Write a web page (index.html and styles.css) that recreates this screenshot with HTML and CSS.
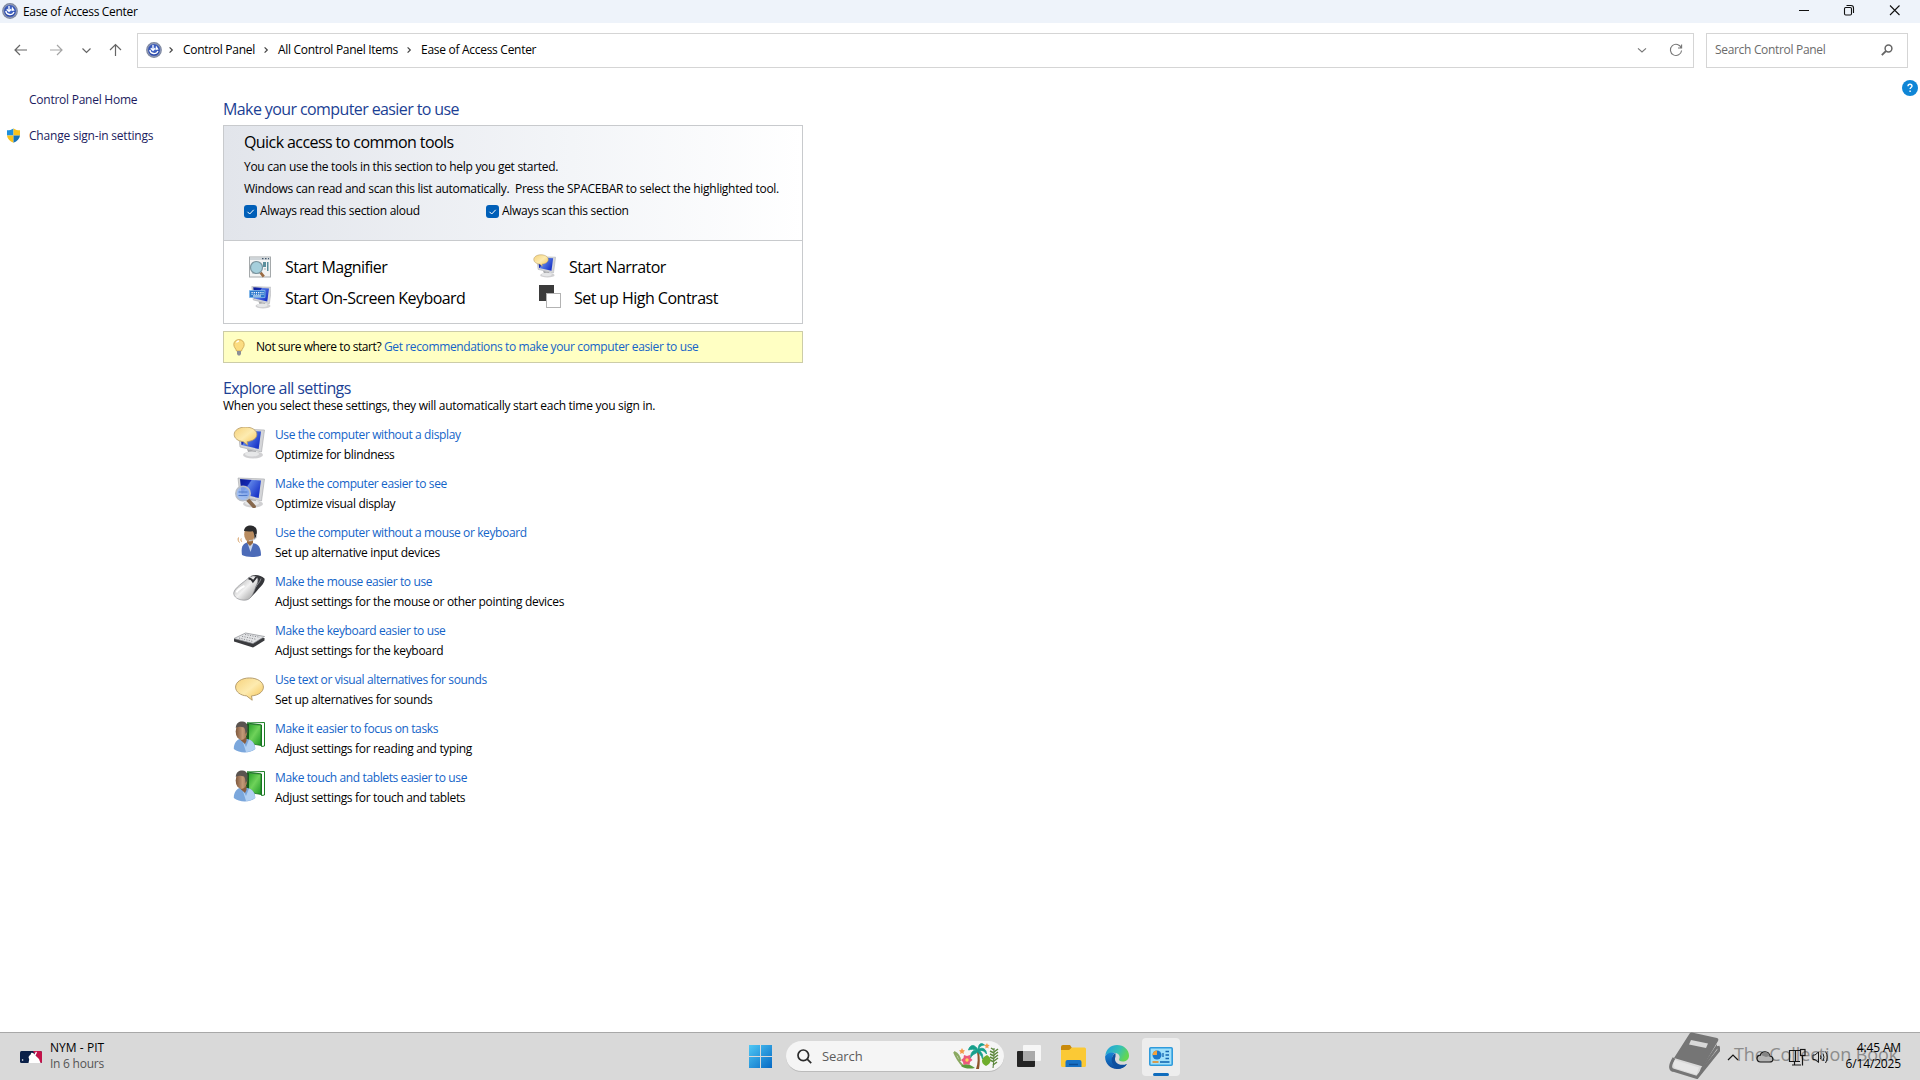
FILE: index.html
```html
<!doctype html>
<html lang="en-us">
  <head>
    <meta charset="utf-8">
    <title>Ease of Access Center</title>
    <link rel="stylesheet" href="styles.css">
  </head>
  <body>
	<!-- shared icon parts -->
	<svg class="defs" width="0" height="0">
		<defs>
			<linearGradient id="g-screen" x1="0" y1="0" x2="1" y2="0.6">
				<stop offset="0" stop-color="#0a1a90"/><stop offset="0.4" stop-color="#1429b4"/><stop offset="0.45" stop-color="#5b80e6"/><stop offset="1" stop-color="#1a35c8"/>
			</linearGradient>
			<linearGradient id="g-bubble" x1="0" y1="0" x2="1" y2="1">
				<stop offset="0" stop-color="#f6d27c"/><stop offset="0.5" stop-color="#fdebb0"/><stop offset="1" stop-color="#f5c04c"/>
			</linearGradient>
			<linearGradient id="g-silver" x1="0" y1="0" x2="1" y2="1">
				<stop offset="0" stop-color="#9a9a9a"/><stop offset="0.5" stop-color="#f1f1f1"/><stop offset="1" stop-color="#8a8a8a"/>
			</linearGradient>
			<linearGradient id="g-skin" x1="0" y1="0" x2="1" y2="0">
				<stop offset="0" stop-color="#7d573c"/><stop offset="0.6" stop-color="#c39a78"/><stop offset="1" stop-color="#9c7252"/>
			</linearGradient>
			<linearGradient id="g-green" x1="0" y1="0" x2="1" y2="1">
				<stop offset="0" stop-color="#1c9a22"/><stop offset="0.5" stop-color="#6fd25a"/><stop offset="1" stop-color="#1d9a26"/>
			</linearGradient>
			<linearGradient id="g-win" x1="0" y1="0" x2="1" y2="1">
				<stop offset="0" stop-color="#4fc8f5"/><stop offset="1" stop-color="#0669c4"/>
			</linearGradient>
			<radialGradient id="g-ease" cx="0.5" cy="0.4" r="0.6">
				<stop offset="0" stop-color="#4d74d8"/><stop offset="1" stop-color="#233f9c"/>
			</radialGradient>
			<symbol id="ease" viewBox="0 0 16 16">
				<circle cx="8" cy="8" r="7.900" fill="#7d879f"/>
				<circle cx="8" cy="8" r="6.300" fill="url(#g-ease)" stroke="#b3bcd4" stroke-width=".6"/>
				<path d="M7 3v5M4.800 6.200L7 8.400l2.200-2.200M3.800 7.800a4.300 4.300 0 0 0 8.200 1.200" fill="none" stroke="#fff" stroke-width="1.300"/>
				<path d="M10 3.500l2.700 4-3.200.5z" fill="#fff"/>
			</symbol>
			<symbol id="monitor" viewBox="0 0 32 32">
				<ellipse cx="20" cy="28" rx="10" ry="3.400" fill="#d0d0d2"/>
				<path d="M14 22l9 2-1 4h-6z" fill="#a9aaad"/>
				<ellipse cx="19" cy="27" rx="7" ry="2.400" fill="#e6e7e8"/>
				<path d="M5 2l26.500 1-3 22L7 20z" fill="#d4d5d8" stroke="#a4a6aa" stroke-width=".6"/>
				<path d="M7 3l21 1.500-2.300 17.500L8.500 18z" fill="url(#g-screen)"/>
			</symbol>
			<symbol id="bubble" viewBox="0 0 32 25">
				<path d="M16 1C8 1 1.500 5 1.500 10.500c0 5 5 8.600 11.500 9.200l5.800 4.500-.7-4.500c7-.5 12.400-4.200 12.400-9.200C30.500 5 24 1 16 1z" fill="url(#g-bubble)" stroke="#b39a68"/>
			</symbol>
			<symbol id="reader" viewBox="0 0 32 32">
				<path d="M14 2l17.500-.5V25l-3 .5V4z" fill="#fff" stroke="#1b7e25"/>
				<path d="M14 3l14 1v20.500L14 22z" fill="url(#g-green)" stroke="#11641b" stroke-width=".7"/>
				<path d="M13 3h3v20h-3z" fill="#175c1d"/>
				<path d="M.8 28c0-6 3-10 8-10.500l6 .5c5 1.500 7.500 5 7.500 10-5 4.500-16 4.500-21.500 0z" fill="#7ba7dc"/>
				<path d="M9 18l4 8 3-7.500c4 1.500 6 5 6 9.500-3 2-6 3-9 3z" fill="#b2d0f2"/>
				<path d="M7.500 16h6v4l-1.500 3-4.500-4z" fill="#8a5d3c"/>
				<ellipse cx="8.500" cy="10.500" rx="5.800" ry="8.500" fill="url(#g-skin)"/>
				<path d="M2.800 7C3 2 6 .4 9.500.5c5 .2 6 5 4.500 10.500l-1.500 2c0-3-.5-5-1.500-6.500C8 5.500 5 5.500 2.800 7z" fill="#5a5450"/>
			</symbol>
			<symbol id="chev" viewBox="0 0 6 10">
				<path d="M1.600 2.300L4.300 5 1.600 7.700" fill="none" stroke="#444" stroke-width="1.200"/>
			</symbol>
			<symbol id="down" viewBox="0 0 10 8">
				<path d="M1 2.300L5 6l4-3.700" fill="none" stroke="currentColor" stroke-width="1.100"/>
			</symbol>
		</defs>
	</svg>

	<div class="titlebar">
		<svg width="16" height="16"><use href="#ease"/></svg>
		<span class="caption">Ease of Access Center</span>
		<svg class="winbtn" width="112" height="14" viewBox="0 0 112 14" fill="none" stroke="#111" stroke-width="1.100">
			<path d="M11 7.500h10M102 2.500l9.500 9.500M111.500 2.500L102 12"/>
			<rect x="56.500" y="4.500" width="7" height="7.500" rx="1.200"/>
			<path d="M58.500 2.500h4.500q2.500 0 2.500 2.500v5"/>
		</svg>
	</div>

	<div class="nav">
		<svg class="arrows" width="110" height="16" viewBox="0 0 110 16" fill="none" stroke="#666" stroke-width="1.200">
			<path d="M1 8h12M6 3L1 8l5 5"/>
			<path d="M36 8h12M43 3l5 5-5 5" stroke="#a5a5a5"/>
			<path d="M68.500 6.500l4 4 4-4"/>
			<path d="M101.500 14V2.500M96 8l5.500-5.500L107 8"/>
		</svg>
		<div class="address">
			<svg width="16" height="16"><use href="#ease"/></svg>
			<svg class="sep first" width="6" height="10"><use href="#chev"/></svg>
			<span>Control Panel</span>
			<svg class="sep" width="6" height="10"><use href="#chev"/></svg>
			<span>All Control Panel Items</span>
			<svg class="sep" width="6" height="10"><use href="#chev"/></svg>
			<span>Ease of Access Center</span>
			<svg class="drop" width="10" height="8"><use href="#down"/></svg>
			<svg width="14" height="14" viewBox="0 0 14 14" fill="none" stroke="#777" stroke-width="1.100">
				<path d="M12.300 5A5.600 5.600 0 1 0 12.600 7.500M12.600 1.500V5H9"/>
			</svg>
		</div>
		<div class="search">
			<span>Search Control Panel</span>
			<svg width="12" height="12" viewBox="0 0 12 12" fill="none" stroke="#666">
				<circle cx="7.500" cy="4.500" r="3.400" stroke-width="1.500"/>
				<path d="M5 7L.8 11.200" stroke-width="1.800"/>
			</svg>
		</div>
	</div>

	<div class="main">
		<div class="sidebar">
			<a>Control Panel Home</a>
			<a class="shielded">
				<svg width="15" height="15" viewBox="0 0 15 15">
					<path d="M7.500.5C5.500 1.800 3.500 2.300 1 2.300V7.500h6.500z" fill="#1f8fdc"/>
					<path d="M7.500.5c2 1.300 4 1.800 6.500 1.800V7.500H7.500z" fill="#f9c21c"/>
					<path d="M1 7.500c.3 3.300 2.800 5.800 6.500 7.200V7.500z" fill="#f9c21c"/>
					<path d="M14 7.500c-.3 3.300-2.800 5.800-6.500 7.200V7.500z" fill="#1672b8"/>
				</svg>
				Change sign-in settings
			</a>
		</div>

		<div class="content">
			<h2>Make your computer easier to use</h2>
			<div class="panel">
				<div class="quick">
					<h3>Quick access to common tools</h3>
					<p>You can use the tools in this section to help you get started.</p>
					<p>Windows can read and scan this list automatically.&nbsp; Press the SPACEBAR to select the highlighted tool.</p>
					<div class="checks">
						<label><svg class="check" viewBox="0 0 13 13"><path d="M3.500 6.800l2.200 2.200 4-4.200"/></svg>Always read this section aloud</label>
						<label><svg class="check" viewBox="0 0 13 13"><path d="M3.500 6.800l2.200 2.200 4-4.200"/></svg>Always scan this section</label>
					</div>
				</div>
				<div class="tools">
					<a>
						<svg width="22" height="22" viewBox="0 0 22 22">
							<rect x=".5" y="1" width="21" height="20" fill="#f3f4f4" stroke="#a5a9ab"/>
							<path d="M1 1.500h20v2.500H1z" fill="#cfd5d9"/>
							<path d="M13 2.700h1.500M16 2.700h1.500M19 2.700h1" stroke="#41566b" stroke-width="1.200"/>
							<path d="M14 6h3v5h-3zM18 6h1.500v9H18z" fill="#5b8f9c"/>
							<path d="M3 7h6M3 17h5M15 13h2" stroke="#a3b0b6"/>
							<path d="M11.500 16.500l3.300 4.200" stroke="#9b6b43" stroke-width="2.800"/>
							<circle cx="7.500" cy="11.500" r="6" fill="#a5cfdc" stroke="#7b959f" stroke-width="1.200"/>
						</svg>
						Start Magnifier
					</a>
					<a class="narrator">
						<svg class="raised" width="23" height="24" viewBox="0 0 23 24">
							<use href="#monitor" x="0" y="1" width="23" height="23"/>
							<use href="#bubble" x="0" y="0" width="16" height="13"/>
						</svg>
						Start Narrator
					</a>
					<a>
						<svg class="raised" width="22" height="24" viewBox="0 0 22 24">
							<use href="#monitor" x="-1" y="0" width="24" height="24"/>
							<path d="M.5 5.500h15.500v7H.5z" fill="#2b78cc" stroke="#7fb6ea" stroke-width=".8"/>
							<path d="M2.500 7.500h12M2.500 9.200h12" stroke="#fff" stroke-dasharray="1.200 1"/>
							<path d="M4 11h8" stroke="#fff"/>
						</svg>
						Start On-Screen Keyboard
					</a>
					<a class="contrast">
						<svg class="raised" width="22" height="24" viewBox="0 0 22 24">
							<rect x="0" y="0" width="15" height="16" fill="#3b3b3b"/>
							<rect x="7.500" y="8.500" width="14" height="14" fill="#fff" stroke="#b3b3b3"/>
						</svg>
						Set up High Contrast
					</a>
				</div>
			</div>

			<div class="note">
				<svg width="12" height="17" viewBox="0 0 12 17">
					<path d="M6 .6C2.800.6.8 2.800.8 5.600c0 2.600 2.200 4 2.700 6.400h5c.5-2.400 2.700-3.800 2.700-6.400C11.200 2.800 9.200.6 6 .6z" fill="#fbdc80" stroke="#c9a04c" stroke-width=".8"/>
					<path d="M3.500 3.500C4 2.500 5 2 6 2" stroke="#fff" fill="none" stroke-width="1.300"/>
					<path d="M4 12h4v3L7 16.500H5L4 15z" fill="#8c8f96"/>
				</svg>
				<span>Not sure where to start? <a>Get recommendations to make your computer easier to use</a></span>
			</div>

			<h2 class="explore">Explore all settings</h2>
			<p class="intro">When you select these settings, they will automatically start each time you sign in.</p>

			<ul class="settings">
				<li>
					<svg width="32" height="32" viewBox="0 0 32 32">
						<use href="#monitor" width="32" height="32"/>
						<use href="#bubble" x="0" y="-1" width="25" height="20"/>
					</svg>
					<div><a>Use the computer without a display</a><p>Optimize for blindness</p></div>
				</li>
				<li>
					<svg width="32" height="32" viewBox="0 0 32 32">
						<use href="#monitor" width="32" height="32"/>
						<path d="M15 24l6 6.500" stroke="#87694d" stroke-width="3.800" stroke-linecap="round"/>
						<circle cx="10" cy="17.500" r="7.200" fill="#8fb3ef" fill-opacity=".85" stroke="#b8bec8" stroke-width="1.600"/>
						<path d="M5.500 16h9M5.500 19.500h9" stroke="#4e78c8"/>
					</svg>
					<div><a>Make the computer easier to see</a><p>Optimize visual display</p></div>
				</li>
				<li>
					<svg width="32" height="32" viewBox="0 0 32 32">
						<path d="M9 30c-1-7 0-11 5-12.500l6 .5c5 1 8 4 8 12.500-4 2-15 2-19-.5z" fill="#4c6bb8"/>
						<path d="M14.500 18l3 9 3-9z" fill="#c6d4ec"/>
						<path d="M14 13h6v5l-3 3-3-3z" fill="#96683f"/>
						<ellipse cx="16.500" cy="9.500" rx="5.300" ry="7.500" fill="#b98c60"/>
						<path d="M11 6C11.500 1.500 15 .2 19 .7c5 .8 6 6 3.800 11.500l-1.500 2c.3-4-.3-6.500-1.500-8-3 .4-6 .3-8.800-.2z" fill="#2b2b2d"/>
						<path d="M23 9c2 4-1 6.500-7 6.500" fill="none" stroke="#c5c8cd"/>
						<path d="M5.500 12.500c-1 2 0 4 1 5M8.300 13.500c-.8 1.200-.2 2.400.4 3.200" fill="none" stroke="#d59a5c"/>
					</svg>
					<div><a>Use the computer without a mouse or keyboard</a><p>Set up alternative input devices</p></div>
				</li>
				<li>
					<svg width="32" height="32" viewBox="0 0 32 32">
						<path d="M18 2c5-2 10-.5 13.500 2.500 1 4.500-5 9-8.500 13.500l-6 6z" fill="#35363a"/>
						<path d="M16 3.500c3-2 6-2 7.500-.5 3 3 .5 7-1.500 12-2 5-4 11.500-11 11.200C5 26 .7 23 .7 19 1.500 13.500 10 9 16 3.500z" fill="url(#g-silver)" stroke="#85878b" stroke-width=".6"/>
						<path d="M15.500 4.500c2 0 3.500 1 4.500 3l3.500-4.500" fill="none" stroke="#2d2e33" stroke-width="2"/>
						<path d="M3.500 18.500c1-3 5-5 8-6.500" stroke="#fff" fill="none" stroke-width="2"/>
						<path d="M28 4.500c-1 4-4 6-5.500 9" stroke="#8b8d92" fill="none"/>
					</svg>
					<div><a>Make the mouse easier to use</a><p>Adjust settings for the mouse or other pointing devices</p></div>
				</li>
				<li>
					<svg width="32" height="32" viewBox="0 0 32 32">
						<path d="M1 15.500v3l19 6 11.500-7V15z" fill="#3a3b3e"/>
						<path d="M12.500 10L31.500 13.500 20 20.500 1 15.500z" fill="#e3e4e6" stroke="#8a8c90" stroke-width=".7"/>
						<path d="M6 15l14 3.500M9 13.300l14 3M12 11.500l15 2.800" stroke="#85878b" stroke-width=".9" stroke-dasharray="1.200 1.300"/>
					</svg>
					<div><a>Make the keyboard easier to use</a><p>Adjust settings for the keyboard</p></div>
				</li>
				<li>
					<svg width="32" height="32" viewBox="0 0 32 32"><use href="#bubble" x="1" y="5" width="31" height="24"/></svg>
					<div><a>Use text or visual alternatives for sounds</a><p>Set up alternatives for sounds</p></div>
				</li>
				<li>
					<svg width="32" height="32"><use href="#reader"/></svg>
					<div><a>Make it easier to focus on tasks</a><p>Adjust settings for reading and typing</p></div>
				</li>
				<li>
					<svg width="32" height="32"><use href="#reader"/></svg>
					<div><a>Make touch and tablets easier to use</a><p>Adjust settings for touch and tablets</p></div>
				</li>
			</ul>
		</div>

		<svg class="help" width="16" height="16" viewBox="0 0 16 16">
			<circle cx="8" cy="8" r="8" fill="#0f86d6"/>
			<path d="M6 6.300C6 4.900 6.900 4.300 8 4.300s2 .7 2 1.800c0 1.400-1.900 1.500-1.900 3M8.100 10.500v1.500" fill="none" stroke="#fff" stroke-width="1.400"/>
		</svg>
	</div>

	<div class="taskbar">
		<div class="widget">
			<svg width="22" height="12" viewBox="0 0 22 12">
				<rect width="22" height="12" rx="1.500" fill="#0b2149"/>
				<path d="M13 0h7.500Q22 0 22 1.500v9q0 1.500-1.500 1.500H20z" fill="#c3134a"/>
				<path d="M8.500 12l.7-3.500L8.500 6l1-1.500 1-.8.8-2 2 .3 1 1.500L16 .5l1 1-1.500 3 3.500 3.500 1.500 4z" fill="#fff"/>
				<circle cx="2.600" cy="9" r=".8" fill="#fff"/>
			</svg>
			<div>NYM - PIT<br><small>In 6 hours</small></div>
		</div>

		<div class="apps">
			<svg width="23" height="23" viewBox="0 0 23 23">
				<path d="M0 0h11v11H0zM12 0h11v11H12zM0 12h11v11H0zM12 12h11v11H12z" fill="url(#g-win)"/>
			</svg>
			<div class="pill">
				<svg width="15" height="15" viewBox="0 0 15 15" fill="none" stroke="#2b2b2b" stroke-width="1.700">
					<circle cx="6.300" cy="6.300" r="5.300"/><path d="M10.200 10.200l4 4"/>
				</svg>
				<span>Search</span>
				<svg class="palm" width="46" height="26" viewBox="0 0 46 26">
					<path d="M1 9c2 5 4 9 9 14M1 9c4 2 6 5 6 9" stroke="#8aa860" stroke-width="2" fill="none"/>
					<path d="M40 25c1-8 1-14 1-20" stroke="#4f7a35" fill="none"/>
					<path d="M41 7l-3-2M41 10l-4-2M41 13l-4-2M41 16l-4-2M41 19l-4-2M41 9l4-3M41 12l4-3M41 15l4-3M41 18l4-3M40 22l4-3" stroke="#5d8a3d" stroke-width="1.500"/>
					<path d="M23 26c2-6 2-11 1-17h2c1 6 1 11 0 17z" fill="#8f542b"/>
					<path d="M25 7C22 1 17 1 15.500 7c3-1 5-1 8 0-4 0-6 3-6 8 2-4 5-4 7-6 2 2 4 3 5 7 1-4-1-7-3-8 3-1 5 0 7 3 0-5-4-7-8-5 1-3 4-4 6-4-4-3-6-1-6.500 5z" fill="#17a08c" stroke="#17a08c" stroke-width=".8"/>
					<path d="M33 23c-6-3-5-8 1-11 5 3 5 8-1 11z" fill="#6fad2c"/>
					<path d="M8 23c4-3 9-2 14 2-5 1-10 1-14-2z" fill="#5b9a3b"/>
					<path d="M11 12l3 1 3-1 .5 3 2 2-2.500 2-.5 3-3-1-3 1-.5-3-2-2 2.500-2z" fill="#ec5a7c"/>
					<circle cx="14" cy="17" r="1.700" fill="#ffd25b"/>
					<path d="M9 5l1 2 2 .5-1.500 1.500.5 2-2-1-2 1 .5-2L6 7.500 8 7zM34 0l.7 1.700 2 .3-1.500 1.400.4 2-1.600-1-1.700 1 .4-2L31 2l2-.3z" fill="#f39a4b"/>
				</svg>
			</div>
			<svg width="24" height="23" viewBox="0 0 24 23">
				<rect x="6" width="18" height="16" rx="1" fill="#f6f6f6"/>
				<rect y="6" width="18" height="16" rx="1" fill="#242424"/>
				<rect x="6" y="6" width="12" height="10" fill="#aaa"/>
			</svg>
			<svg class="explorer" width="25" height="23" viewBox="0 0 25 23">
				<path d="M0 2q0-2 2-2h7l2 3-2 2H0z" fill="#c98a0b"/>
				<path d="M0 5h8l3-2.500h12.500Q25 2.500 25 4v16.500q0 1.500-1.500 1.500h-22Q0 22 0 20.500z" fill="#fbc935"/>
				<path d="M4.500 22v-5q0-2 2-2h12q2 0 2 2v5z" fill="#1872c5"/>
				<path d="M8 19.500h9" stroke="#0b4f98" stroke-width="1.500"/>
			</svg>
			<svg class="edge" width="24" height="24" viewBox="0 0 24 24">
				<defs>
					<linearGradient id="e1" x1="0" y1="0" x2="1" y2=".4"><stop offset="0" stop-color="#1f9fe0"/><stop offset=".6" stop-color="#35c1b4"/><stop offset="1" stop-color="#63d653"/></linearGradient>
					<linearGradient id="e2" x1="0" y1="0" x2="0" y2="1"><stop offset="0" stop-color="#1786d8"/><stop offset="1" stop-color="#0c4a9c"/></linearGradient>
				</defs>
				<path d="M.3 10.500C1.200 4 6 0 12 0c7 0 12 5 12 10.500 0 4-3 6-6.300 6-3 0-4.200-1.200-3.500-2.500 1-1.500.8-5.500-4-6C6 7.500 2 8.500.3 10.500z" fill="url(#e1)"/>
				<path d="M.2 11C2 7.500 7 6.800 10.500 8 7 9 6 15 9.500 18.500c3 3 8.500 3 12.500.5-2 3.300-5.700 5-10 5C5 24-.6 18 .2 11z" fill="url(#e2)"/>
				<path d="M10.500 8.300C5 11 5 21 13.500 23.800c3.700-.4 6.600-2 8.500-4.800-7 2.600-14-1-11.500-7.500z" fill="#0d4f9e"/>
			</svg>
			<div class="active">
				<svg width="24" height="19" viewBox="0 0 24 19">
					<rect x=".8" y=".8" width="22.400" height="17.400" rx="1" fill="#9fe0fa" stroke="#2f9bdc" stroke-width="1.600"/>
					<circle cx="8" cy="8" r="4.500" fill="#1d78c8"/>
					<path d="M8 8V3.500A4.500 4.500 0 0 0 3.500 8z" fill="#f4a13a"/>
					<path d="M14 10V6M16.500 4.500h3.500M16.500 8H20M16.500 11.500H20" stroke="#1567b1" stroke-width="1.300"/>
					<path d="M3.500 15h6" stroke="#e58a22" stroke-width="1.600"/><path d="M11 15h9.500" stroke="#1567b1" stroke-width="1.600"/>
				</svg>
			</div>
		</div>

		<div class="tray">
			<svg width="102" height="18" viewBox="0 0 102 18" fill="none" stroke="#161616" stroke-width="1.200">
				<path d="M1 12l5-5 5 5"/>
				<path d="M33.500 14h9c4.500 0 4.500-5.500.3-6-1-5-8-5.500-9.500-.8-4.500 0-4.300 6.800.2 6.800z" fill="#b5b5b5"/>
				<path d="M34 7c2-4.500 8-3.500 8.700 1l-3.700 1z" fill="#858585" stroke="none"/>
				<path d="M73 2.500H62.500V13.500H73M67.500 13.500V17M65 17h9M68.500 2.500v11M75.500 8v9.500"/>
				<rect x="73.500" y="1.500" width="4.500" height="6"/>
				<path d="M86 7h2l3.500-3v10.500l-3.500-3h-2z" stroke-width="1"/>
				<path d="M93.500 7.500q1 1.700 0 3.500M96 5.500q2 3.700 0 7.500M98.500 3.500q3.500 5.700 0 11.500" stroke-width="1"/>
			</svg>
			<div class="clock">4:45 AM<br>6/14/2025</div>
		</div>

		<div class="stamp">
			<svg width="51" height="47" viewBox="0 0 51 47">
				<path d="M23 .5L48 6q2 .5 1 3L34 34.500 5 26 20 2.500q1-2.500 3-2z" fill="#757575"/>
				<path d="M22 8l17 3.500-2 4.500-17-3.500z" fill="#d9d9d9"/>
				<path d="M5 26Q-2 38 5.500 38.500l22.500 7L50 18l-1-4" fill="none" stroke="#757575" stroke-width="3"/>
				<path d="M6 28l24 7.500-2.500 7L6 36q-3-4 0-8z" fill="#e6e6e6"/>
				<path d="M32 36l16-24v5L29 44z" fill="#757575"/>
			</svg>
			<span>The Collection Book</span>
		</div>
	</div>
  </body>
</html>
```

FILE: styles.css
```css
      *
	  {
		box-sizing: border-box;
      }

      body
	  {
		font-family: "Open Sans", "Noto Sans", sans-serif;
		font-size: 12px;
		letter-spacing: -0.32px;
		color: #000;
		background-color: white;
		margin: 0;
		width: 1920px;
		height: 1080px;
		overflow: hidden;
		display: flex;
		flex-direction: column;
      }

	  svg
	  {
		display: block;
		flex: none;
	  }

	  .defs
	  {
		position: absolute;
	  }

	  h2, h3, p, ul
	  {
		margin: 0;
		padding: 0;
		font-weight: normal;
	  }

	  span, a, label, p, h2, h3
	  {
		white-space: nowrap;
	  }

	  .titlebar
	  {
		height: 23px;
		background-color: #eef3fa;
		display: flex;
		align-items: center;
		padding: 0 20px 1px 2px;
	  }

	  .caption
	  {
		margin-left: 5px;
	  }

	  .winbtn
	  {
		margin-left: auto;
		margin-bottom: 2px;
	  }

	  .nav
	  {
		height: 54px;
		display: flex;
		align-items: center;
		padding: 0 12px 0 14px;
	  }

	  .arrows
	  {
		margin-right: 13px;
	  }

	  .address
	  {
		width: 1557px;
		height: 35px;
		border: 1px solid #d5d5d5;
		letter-spacing: -0.29px;
		display: flex;
		align-items: center;
		padding: 0 10px 0 8px;
	  }

	  .address span, .search span, .note span
	  {
		padding-bottom: 1px;
	  }

	  .sep
	  {
		margin: 0 9px 0 8px;
	  }

	  .sep.first
	  {
		margin-left: 6px;
	  }

	  .drop
	  {
		margin-left: auto;
		margin-right: 22px;
		color: #777;
	  }

	  .search
	  {
		width: 202px;
		height: 35px;
		border: 1px solid #d5d5d5;
		margin-left: auto;
		display: flex;
		align-items: center;
		justify-content: space-between;
		padding: 0 14px 0 8px;
		color: #6b6b6b;
	  }

	  .main
	  {
		flex: 1;
		display: flex;
	  }

	  .sidebar
	  {
		width: 223px;
		padding: 12px 0 0 29px;
		letter-spacing: -0.2px;
		color: #1b1b5e;
	  }

	  .sidebar a
	  {
		display: flex;
		align-items: center;
		height: 20px;
		margin-bottom: 16px;
	  }

	  .sidebar a:first-child
	  {
		letter-spacing: -0.25px;
	  }

	  .shielded svg
	  {
		margin: 0 8px 0 -23px;
	  }

	  .content
	  {
		width: 580px;
		padding-top: 22px;
	  }

	  h2
	  {
		font-size: 16px;
		letter-spacing: -0.6px;
		line-height: 20px;
		color: #1c3f94;
	  }

	  .panel
	  {
		height: 199px;
		margin-top: 6px;
		border: 1px solid #c8cacd;
	  }

	  .quick
	  {
		height: 115px;
		padding: 6px 0 0 20px;
		letter-spacing: -0.29px;
		border-bottom: 1px solid #c8cacd;
		background: linear-gradient(to right, #e2e5eb, #f3f5f8 60%, #fff);
	  }

	  h3
	  {
		font-size: 16px;
		letter-spacing: -0.58px;
		line-height: 21px;
		margin-bottom: 3px;
	  }

	  .quick p
	  {
		line-height: 22px;
	  }

	  .checks
	  {
		display: flex;
	  }

	  .checks label
	  {
		width: 242px;
		height: 21px;
		display: flex;
		align-items: center;
	  }

	  .check
	  {
		width: 13px;
		height: 13px;
		margin: 1px 3px 0 0;
		border-radius: 3px;
		background-color: #005fb8;
		fill: none;
		stroke: white;
	  }

	  .tools
	  {
		display: grid;
		grid-template-columns: 284px auto;
		grid-auto-rows: 31px;
		padding: 10px 0 0 25px;
		font-size: 16px;
		letter-spacing: -0.55px;
	  }

	  .tools a
	  {
		display: flex;
		align-items: center;
		gap: 14px;
	  }

	  .tools .narrator
	  {
		gap: 13px;
	  }

	  .tools .contrast
	  {
		margin-left: 6px;
		gap: 13px;
		letter-spacing: -0.5px;
	  }

	  .raised
	  {
		margin-bottom: 2px;
	  }

	  .note
	  {
		height: 32px;
		margin-top: 7px;
		padding-left: 9px;
		border: 1px solid #cccca8;
		background-color: #ffffc3;
		letter-spacing: -0.42px;
		display: flex;
		align-items: center;
		gap: 11px;
	  }

	  .note a, .settings a
	  {
		color: #1464c8;
	  }

	  .note a
	  {
		letter-spacing: -0.37px;
	  }

	  .explore
	  {
		margin-top: 15px;
	  }

	  .intro
	  {
		line-height: 16px;
		letter-spacing: -0.28px;
	  }

	  .settings
	  {
		list-style: none;
		margin-top: 11px;
		padding-left: 9px;
	  }

	  .settings li
	  {
		display: flex;
		gap: 11px;
		height: 49px;
		line-height: 20px;
	  }

	  .settings a
	  {
		letter-spacing: -0.38px;
	  }

	  .settings svg
	  {
		margin: 2px -1px 0 1px;
	  }

	  .help
	  {
		margin: 3px 2px 0 auto;
	  }

	  .taskbar
	  {
		position: relative;
		height: 48px;
		border-top: 1px solid #a8a8a8;
		background-color: #d9d9d9;
		display: flex;
		align-items: center;
	  }

	  .widget
	  {
		width: 749px;
		padding-left: 20px;
		display: flex;
		align-items: center;
		gap: 8px;
		line-height: 16px;
		letter-spacing: 0.05px;
	  }

	  .widget div
	  {
		padding-bottom: 1px;
	  }

	  .widget small
	  {
		font-size: 12px;
		letter-spacing: -0.25px;
		color: #555;
	  }

	  .apps
	  {
		display: flex;
		align-items: center;
	  }

	  .pill
	  {
		width: 218px;
		height: 31px;
		margin: 0 13px 0 14px;
		padding: 0 5px 0 11px;
		border-radius: 16px;
		background-color: #f5f5f5;
		border-bottom: 1px solid #bbb;
		display: flex;
		align-items: center;
		gap: 10px;
		font-size: 13px;
		letter-spacing: -0.1px;
		color: #5c5c5c;
	  }

	  .palm
	  {
		margin-left: auto;
	  }

	  .explorer
	  {
		margin-left: 20px;
	  }

	  .edge
	  {
		margin-left: 19px;
	  }

	  .active
	  {
		position: relative;
		width: 38px;
		height: 38px;
		margin-left: 13px;
		border-radius: 4px;
		background-color: #ededed;
		display: flex;
		align-items: center;
		justify-content: center;
	  }

	  .active::after
	  {
		content: "";
		position: absolute;
		left: 11px;
		bottom: 0;
		width: 16px;
		height: 3px;
		border-radius: 2px;
		background-color: #0f6cbd;
	  }

	  .tray
	  {
		margin-left: auto;
		padding-right: 19px;
		display: flex;
		align-items: center;
		position: relative;
		z-index: 1;
	  }

	  .clock
	  {
		width: 72px;
		padding-bottom: 1px;
		text-align: right;
		line-height: 16px;
		letter-spacing: -0.15px;
	  }

	  /* sits across the tray */
	  .stamp
	  {
		position: absolute;
		left: 1669px;
		top: -1px;
		display: flex;
		align-items: center;
		gap: 14px;
		font-size: 18px;
		letter-spacing: -0.1px;
		color: #8c8c8c;
	  }

	  .stamp span
	  {
		padding-bottom: 3px;
	  }
```
